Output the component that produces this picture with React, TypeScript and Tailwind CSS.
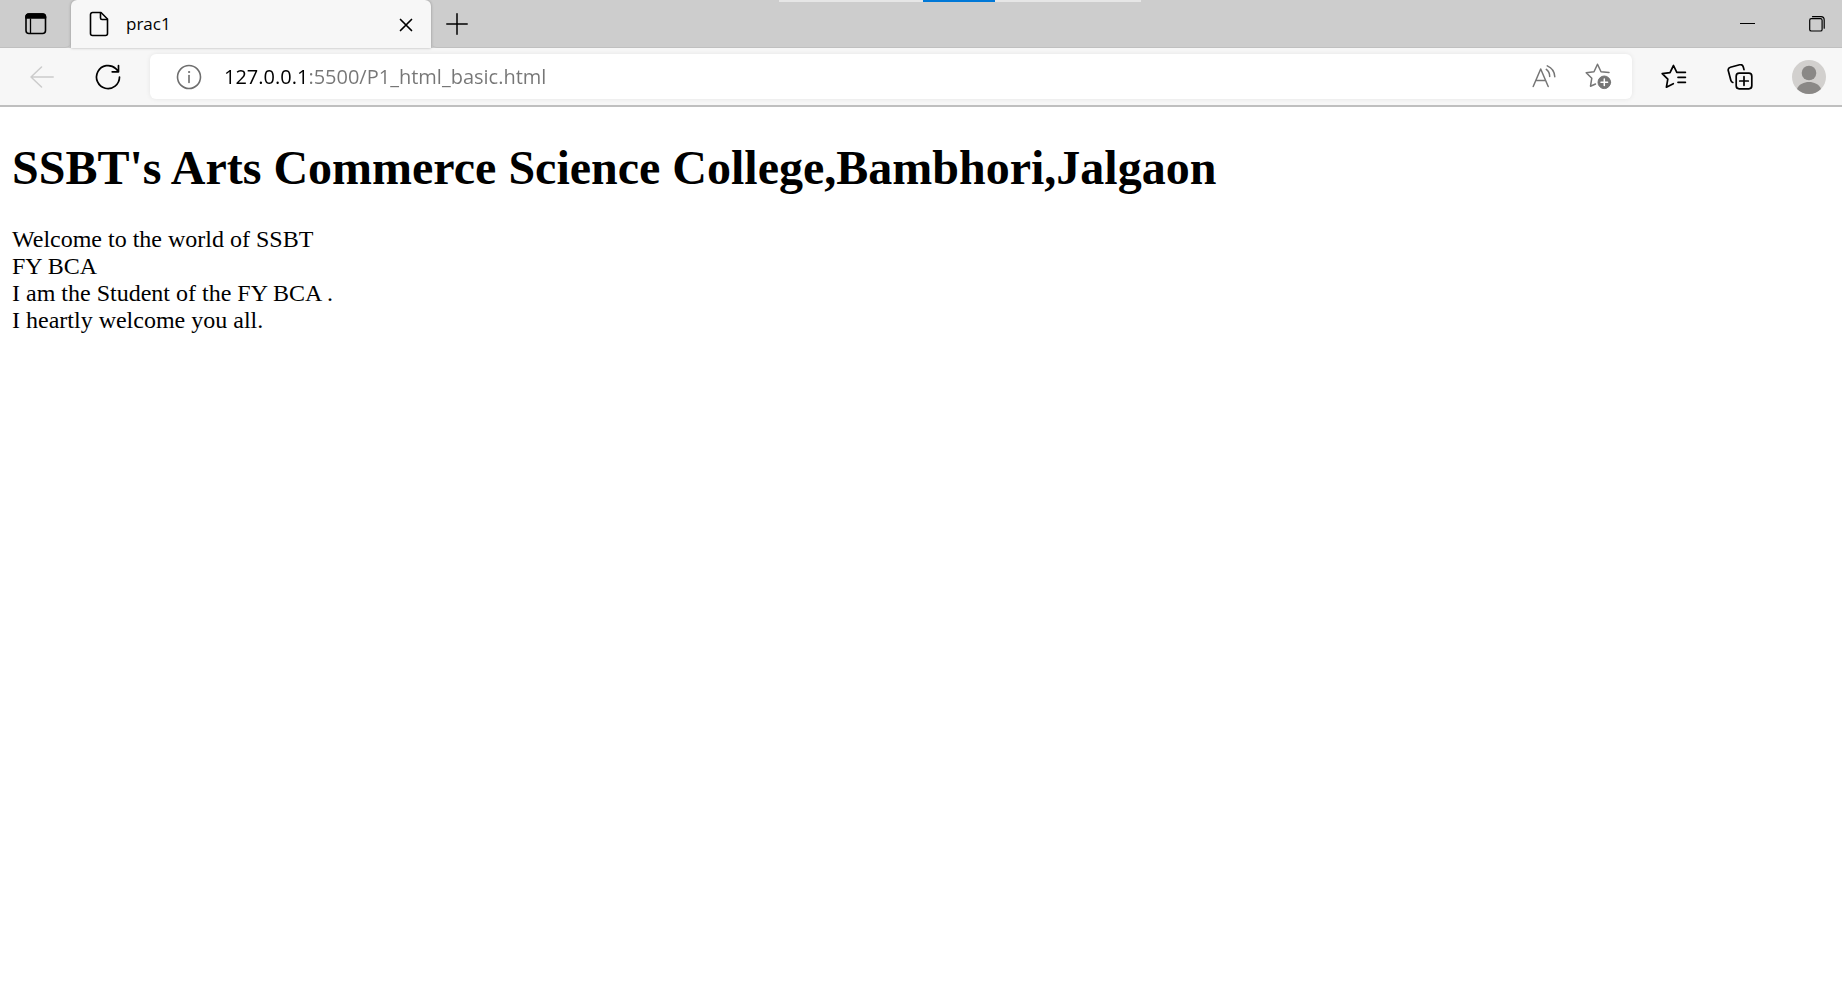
import React, { useState } from "react";

type IconButtonProps = {
  label: string;
  className?: string;
  disabled?: boolean;
  children: React.ReactNode;
};

function IconButton({ label, className = "", disabled, children }: IconButtonProps) {
  return (
    <button
      type="button"
      aria-label={label}
      disabled={disabled}
      className={`flex h-9 w-9 shrink-0 items-center justify-center ${className}`}
    >
      {children}
    </button>
  );
}

const stroke = {
  fill: "none",
  stroke: "currentColor",
  strokeWidth: 1.5,
  strokeLinecap: "round",
  strokeLinejoin: "round",
} as const;

function TabStrip() {
  return (
    <header className="relative flex h-12 items-end bg-[#cdcdcd]">
      <div className="flex h-12 w-[71px] items-center justify-center rounded-br-md border-b border-[#c0c0c0] pl-px pt-px">
        <IconButton label="Tab actions menu">
          <svg width="22" height="22" viewBox="0 0 22 22" {...stroke} strokeWidth={1.6}>
            <rect x="1" y="1" width="19.5" height="19.5" rx="3" />
            <path d="M1 5V4a3 3 0 0 1 3-3h13.500a3 3 0 0 1 3 3v1z" fill="currentColor" />
            <path d="M5.500 6v14" strokeWidth="1.300" />
          </svg>
        </IconButton>
      </div>
      <div className="flex h-12 w-[360px] items-center rounded-t-md bg-[#f7f7f7] pl-[18px] pr-[7px] shadow-[0_0_3px_rgba(0,0,0,0.3)]">
        <svg width="20" height="26" viewBox="0 0 20 26" {...stroke} strokeWidth={1.6} className="shrink-0">
          <path d="M3.500 1.500H12L18.500 8v14.500a2 2 0 0 1-2 2h-13a2 2 0 0 1-2-2v-19a2 2 0 0 1 2-2z" />
          <path d="M11.500 1.800V7a1.500 1.500 0 0 0 1.500 1.500h5.200" />
        </svg>
        <span className="ml-[17px] flex-1 font-['Open_Sans',sans-serif] text-[17px] leading-6 text-black">prac1</span>
        <IconButton label="Close tab" className="pt-0.5">
          <svg width="14" height="14" viewBox="0 0 14 14" {...stroke} strokeWidth={1.7}>
            <path d="M1.500 1.500l11 11M12.500 1.500l-11 11" />
          </svg>
        </IconButton>
      </div>
      <div className="flex h-12 min-w-0 flex-1 items-center justify-between rounded-bl-md border-b border-[#c0c0c0] pl-2 pr-[7px]">
        <IconButton label="New tab">
          <svg width="22" height="22" viewBox="0 0 22 22" {...stroke}>
            <path d="M11 .8v20.400M.8 11h20.400" />
          </svg>
        </IconButton>
        <div className="flex items-center gap-[34px]">
          <IconButton label="Minimize">
            <svg width="15" height="15" viewBox="0 0 15 15" stroke="currentColor" strokeWidth="1">
              <path d="M0 7.500h15" />
            </svg>
          </IconButton>
          <IconButton label="Restore">
            <svg width="16" height="16" viewBox="0 0 16 16" {...stroke} strokeWidth={1.2}>
              <rect x=".7" y="2.600" width="12.400" height="12.400" rx="1.600" />
              <path d="M3.500.7h8.500a3.200 3.200 0 0 1 3.200 3.200v8.300" />
            </svg>
          </IconButton>
        </div>
      </div>
      <div className="absolute left-1/2 top-0 flex h-0.5 w-[362px] -translate-x-[142px] justify-center bg-[#e6e6e6] pr-0.5">
        <div className="h-0.5 w-[72px] bg-[#0078d7]" />
      </div>
    </header>
  );
}

function Toolbar() {
  const [url, setUrl] = useState("127.0.0.1:5500/P1_html_basic.html");
  return (
    <nav aria-label="Browser toolbar" className="flex h-[59px] items-center border-b-2 border-[#bfbfbf] bg-[#f7f7f7] pl-6 pr-[15px]">
      <IconButton label="Back" disabled className="text-[#cccccc]">
        <svg width="24" height="22" viewBox="0 0 24 22" {...stroke}>
          <path d="M23.200 11H1M11.500 1L1 11l10.500 10" />
        </svg>
      </IconButton>
      <IconButton label="Refresh" className="ml-[30px]">
        <svg width="26" height="26" viewBox="0 0 26 26" {...stroke} strokeWidth={1.7}>
          <path d="M24.500 13A11.500 11.500 0 1 1 20.800 4.600L23.500 7.500M23.500 1.500v6.300h-6.300" />
        </svg>
      </IconButton>
      <div className="ml-6 flex h-[45px] min-w-0 flex-1 items-center rounded-md bg-white pl-[21px] pr-4 shadow-[0_0_5px_rgba(0,0,0,0.08)]">
        <IconButton label="View site information" className="text-[#6e6e6e]">
          <svg width="26" height="26" viewBox="0 0 26 26" {...stroke} strokeWidth={1.6}>
            <circle cx="13" cy="13" r="11.500" />
            <path d="M13 11.500v7" />
            <circle cx="13" cy="8" r=".6" fill="currentColor" strokeWidth="1" />
          </svg>
        </IconButton>
        <input
          type="text"
          aria-label="Address bar"
          value={url}
          spellCheck={false}
          onChange={(event) => setUrl(event.target.value)}
          className="ml-[17px] h-8 min-w-0 flex-1 bg-[linear-gradient(90deg,#000000_84px,#767676_84px)] bg-clip-text font-['Open_Sans',sans-serif] text-[20px] leading-8 text-transparent caret-black outline-none"
        />
        <IconButton label="Read aloud" className="text-[#767676]">
          <svg width="24" height="24" viewBox="0 0 24 24" {...stroke}>
            <path d="M1.200 21.500L8.700 4l7.500 17.500M3.800 15.600h9.800" />
            <path d="M14.300 4.400a9 9 0 0 1 3.400 7M15.300.9a12.500 12.500 0 0 1 7.500 10.800" />
          </svg>
        </IconButton>
        <IconButton label="Add this page to favorites" className="ml-[18px] text-[#767676]">
          <svg width="27" height="27" viewBox="0 0 27 27" {...stroke}>
            <path d="M24 9.400L16 8.700 12.500 1.200 9 8.700 1.200 9.700 6.800 15.200 5.500 23.200 10.500 21" />
            <circle cx="19.300" cy="19.300" r="6.300" fill="currentColor" strokeWidth="1" />
            <path d="M19.300 16v6.600M16 19.300h6.600" stroke="white" />
          </svg>
        </IconButton>
      </div>
      <IconButton label="Favorites" className="ml-6">
        <svg width="26" height="25" viewBox="0 0 26 25" {...stroke} strokeWidth={1.7}>
          <path d="M15.800 8.300L12.500 1.500 9 8.600 1.200 9.600 6.800 15.100 5.400 23.200 12.300 19.700M15.800 8.300h8.600M17 13.300h7.400M17 18.300h7.400" />
        </svg>
      </IconButton>
      <IconButton label="Collections" className="ml-[30px]">
        <svg width="26" height="26" viewBox="0 0 26 26" {...stroke} strokeWidth={1.7}>
          <rect x="9.200" y="9.200" width="15.600" height="15.600" rx="3" />
          <path d="M17 12.700v8.600M12.700 17h8.600" />
          <path d="M5.800 18.500a3 3 0 0 1-1.900-2L1.300 6.800a3 3 0 0 1 2.100-3.600l9.300-2.400a3 3 0 0 1 3.600 2.100l.7 2.700" />
        </svg>
      </IconButton>
      <IconButton label="Profile" className="ml-[33px]">
        <svg width="34" height="34" viewBox="0 0 34 34">
          <circle cx="17" cy="17" r="17" fill="#d2d0ce" />
          <circle cx="17" cy="13" r="7.300" fill="#8a8886" />
          <path d="M5 29c2-5 7-7 12-7s10 2 12 7a17 17 0 0 1-24 0z" fill="#8a8886" />
        </svg>
      </IconButton>
    </nav>
  );
}

function CollegePage() {
  return (
    <main className="px-3 font-['Liberation_Serif',serif] text-2xl leading-[27px] text-black">
      <h1 className="mb-[29px] mt-8 text-5xl font-bold leading-[58px]">
        SSBT's Arts Commerce Science College,Bambhori,Jalgaon
      </h1>
      <p>
        Welcome to the world of SSBT
        <br />
        FY BCA
        <br />
        I am the Student of the FY BCA .
        <br />
        I heartly welcome you all.
      </p>
    </main>
  );
}

export default function App() {
  return (
    <div className="min-h-screen bg-white text-black">
      <TabStrip />
      <Toolbar />
      <CollegePage />
    </div>
  );
}
